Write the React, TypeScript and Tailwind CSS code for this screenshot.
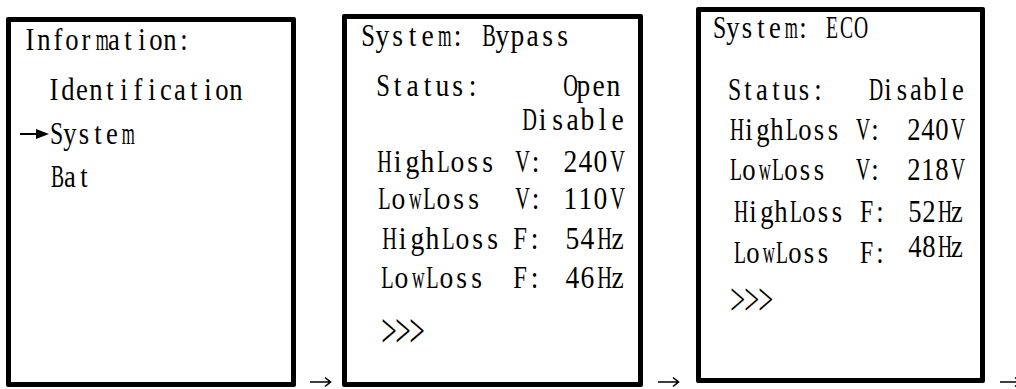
import React from "react";

// each glyph sits in a fixed cell so the serif face reads like the LCD's fixed-width font
const squeeze = (c: string) => {
  if ("mwMW".includes(c)) return "scale-x-60";
  if ("HOCDVBEL".includes(c)) return "scale-x-70";
  if ("SF".includes(c)) return "scale-x-85";
  return "scale-x-95";
};

const Txt: React.FC<{ t: string; cell: string; className?: string }> = ({ t, cell, className = "" }) => (
  <span className={`flex shrink-0 ${className}`}>
    {Array.from(t).map((c, i) => (
      <span key={i} className={`inline-block shrink-0 text-center ${squeeze(c)} ${cell}`}>
        {c === " " ? "\u00a0" : c}
      </span>
    ))}
  </span>
);

const Row: React.FC<{ className?: string; children: React.ReactNode }> = ({ className = "", children }) => (
  <div className={`flex h-[30px] shrink-0 items-center leading-[30px] scale-y-110 ${className}`}>{children}</div>
);

const StepArrow: React.FC<{ className?: string }> = ({ className = "" }) => (
  <svg width="22" height="12" viewBox="0 0 22 12" className={`shrink-0 ${className}`}>
    <path d="M0 6H20.5M15 1.5L20.5 6L15 10.5" fill="none" stroke="#000" strokeWidth="1.6" />
  </svg>
);

const Pointer = () => (
  <svg width="29" height="12" viewBox="0 0 29 12" className="ml-[9px] shrink-0">
    <path d="M0 6H19" stroke="#000" strokeWidth="1.6" />
    <path d="M16 1.5L29 6L16 10.5Z" fill="#000" />
  </svg>
);

type Reading = {
  label: string;
  unit: string;
  value: string;
  indent: string;
  width: string;
  gap: string;
  right: string;
  lift?: boolean;
};

const ReadingRow: React.FC<{ r: Reading; cell: string }> = ({ r, cell }) => (
  <Row className={`${r.gap} ${r.indent} ${r.right}`}>
    <Txt t={r.label} cell={cell} className={r.width} />
    <Txt t={`${r.unit}:`} cell={cell} />
    <Txt t={r.value} cell={cell} className={`ml-auto ${r.lift ? "-translate-y-[5px]" : ""}`} />
  </Row>
);

const bypass: Reading[] = [
  { label: "HighLoss", unit: "V", value: "240V", indent: "ml-[28px]", width: "w-[138px]", gap: "mt-[12px]", right: "mr-[15px]" },
  { label: "LowLoss", unit: "V", value: "110V", indent: "ml-[29px]", width: "w-[137px]", gap: "mt-[7px]", right: "mr-[15px]" },
  { label: "HighLoss", unit: "F", value: "54Hz", indent: "ml-[33px]", width: "w-[132px]", gap: "mt-[10px]", right: "mr-[13px]" },
  { label: "LowLoss", unit: "F", value: "46Hz", indent: "ml-[32px]", width: "w-[133px]", gap: "mt-[9px]", right: "mr-[13px]" },
];

const eco: Reading[] = [
  { label: "HighLoss", unit: "V", value: "240V", indent: "ml-[27px]", width: "w-[126px]", gap: "mt-[10px]", right: "mr-[17px]" },
  { label: "LowLoss", unit: "V", value: "218V", indent: "ml-[27px]", width: "w-[126px]", gap: "mt-[10px]", right: "mr-[17px]" },
  { label: "HighLoss", unit: "F", value: "52Hz", indent: "ml-[31px]", width: "w-[127px]", gap: "mt-[12px]", right: "mr-[16px]" },
  { label: "LowLoss", unit: "F", value: "48Hz", indent: "ml-[31px]", width: "w-[127px]", gap: "mt-[11px]", right: "mr-[16px]", lift: true },
];

export default function App() {
  return (
    <div className="flex h-[389px] w-[1016px] items-start overflow-hidden bg-white font-['Liberation_Serif',serif] text-black">
      {/* menu */}
      <div className="ml-[6px] mt-[17px] flex h-[370px] w-[290px] shrink-0 flex-col rounded-[2px] border-[5px] border-black pt-[3px] text-[28px]">
        <Row className="ml-[12px]">
          <Txt t="Information:" cell="w-[14px]" />
        </Row>
        <Row className="ml-[36px] mt-[20px]">
          <Txt t="Identification" cell="w-[14px]" />
        </Row>
        <Row className="mt-[14px]">
          <Pointer />
          <Txt t="System" cell="w-[14px]" />
        </Row>
        <Row className="ml-[38px] mt-[13px]">
          <Txt t="Bat" cell="w-[14px]" />
        </Row>
      </div>

      <StepArrow className="ml-[14px] self-end mb-[1px]" />

      {/* bypass */}
      <div className="ml-[10px] mt-[14px] flex h-[373px] w-[301px] shrink-0 flex-col rounded-[2px] border-[5px] border-black pt-[1px] text-[29px]">
        <Row className="ml-[13px]">
          <Txt t="System: Bypass" cell="w-[15px]" />
        </Row>
        <Row className="ml-[28px] mr-[17px] mt-[20px] justify-between">
          <Txt t="Status:" cell="w-[15px]" />
          <Txt t="Open" cell="w-[15px]" />
        </Row>
        <Row className="mr-[13px] mt-[4px] justify-end">
          <Txt t="Disable" cell="w-[15px]" />
        </Row>
        {bypass.map((r) => (
          <ReadingRow key={r.label + r.unit} r={r} cell="w-[15px]" />
        ))}
        <Row className="ml-[34px] mt-[23px]">
          <Txt t=">>>" cell="w-[14px]" className="scale-y-150" />
        </Row>
      </div>

      <StepArrow className="ml-[15px] self-end mb-[1px]" />

      {/* eco */}
      <div className="ml-[16px] mt-[7px] flex h-[376px] w-[289px] shrink-0 flex-col rounded-[2px] border-[5px] border-black pt-[1px] text-[28px]">
        <Row className="ml-[11px]">
          <Txt t="System: ECO" cell="w-[14px]" />
        </Row>
        <Row className="ml-[26px] mr-[15px] mt-[32px] justify-between">
          <Txt t="Status:" cell="w-[14px]" />
          <Txt t="Disable" cell="w-[14px]" />
        </Row>
        {eco.map((r) => (
          <ReadingRow key={r.label + r.unit} r={r} cell="w-[14px]" />
        ))}
        <Row className="ml-[29px] mt-[17px]">
          <Txt t=">>>" cell="w-[14px]" className="scale-y-150" />
        </Row>
      </div>

      <StepArrow className="ml-[15px] self-end mb-[1px]" />
    </div>
  );
}
